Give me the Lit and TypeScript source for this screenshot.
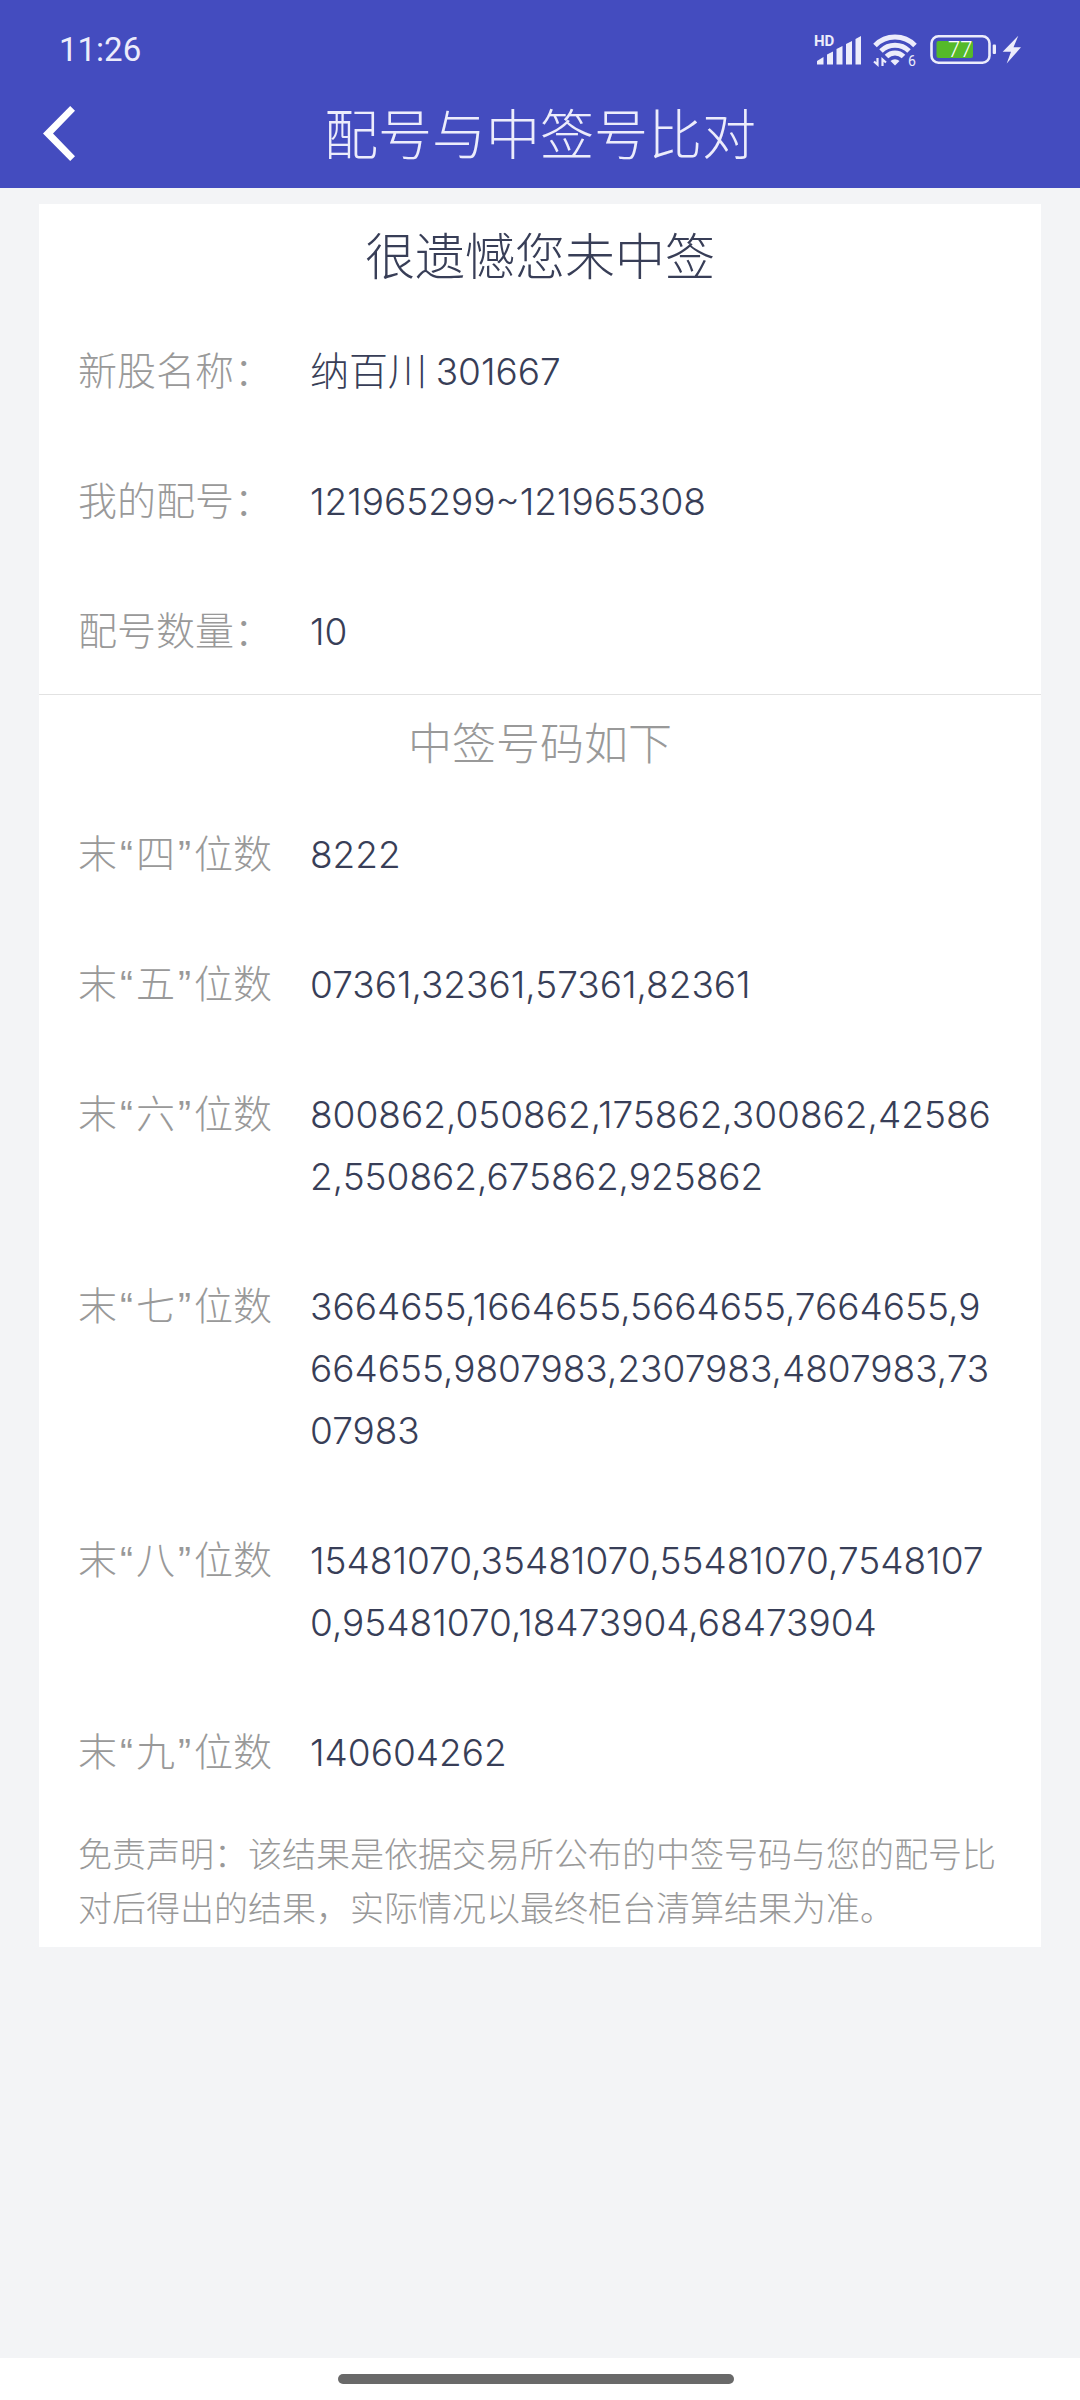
import { LitElement, html, css, svg } from "lit";
import { customElement, property } from "lit/decorators.js";

interface Entry {
  label: string;
  name?: string;
  digits: string;
}

interface WinningTail {
  digit: string;
  lines: string[];
}

const application: Entry[] = [
  { label: "新股名称：", name: "纳百川", digits: "301667" },
  { label: "我的配号：", digits: "121965299~121965308" },
  { label: "配号数量：", digits: "10" },
];

const winningTails: WinningTail[] = [
  { digit: "四", lines: ["8222"] },
  { digit: "五", lines: ["07361,32361,57361,82361"] },
  { digit: "六", lines: ["800862,050862,175862,300862,42586", "2,550862,675862,925862"] },
  {
    digit: "七",
    lines: ["3664655,1664655,5664655,7664655,9", "664655,9807983,2307983,4807983,73", "07983"],
  },
  { digit: "八", lines: ["15481070,35481070,55481070,7548107", "0,95481070,18473904,68473904"] },
  { digit: "九", lines: ["140604262"] },
];

@customElement("status-bar")
export class StatusBar extends LitElement {
  @property() time = "";
  @property({ type: Number }) battery = 0;

  static styles = css`
    :host {
      display: flex;
      justify-content: space-between;
      align-items: center;
      height: 78px;
      padding: 22px 59px 0;
      box-sizing: border-box;
      color: #ececfb;
    }
    .time {
      font: 400 33px/56px Roboto, "Liberation Sans", sans-serif;
    }
    .icons {
      display: block;
      width: 206px;
      height: 34px;
      overflow: visible;
    }
    .solid {
      fill: currentColor;
    }
    .line {
      fill: none;
      stroke: currentColor;
    }
    .charge {
      fill: #55b92a;
    }
    .network {
      font: 700 15px Roboto, sans-serif;
    }
    .generation {
      font: 400 14px Roboto, sans-serif;
    }
    .level {
      font: 300 22px Roboto, sans-serif;
      fill: #fff;
    }
  `;

  private signal() {
    return svg`
      <text class="solid network" x="-1" y="13">HD</text>
      <path class="solid" d="M2 28 8.500 24V31.500H2ZM12 21.500 18 18.500V31.500H12ZM21.500 16 27.500 13V31.500H21.500ZM31 11 37 8V31.500H31ZM40.500 6 46 3V31.500H40.500Z"/>`;
  }

  private wifi() {
    return svg`
      <g class="line" stroke-width="5">
        <path d="M60 12.400A28 28 0 0 1 100 12.400"/>
        <path d="M66 18A20 20 0 0 1 94 18"/>
        <path d="M71.500 23.500A12 12 0 0 1 88.500 23.500"/>
      </g>
      <path class="solid" d="M80 32.500 75.500 28A6.500 6.500 0 0 1 84.500 28Z"/>
      <path class="line" stroke-width="2.200" d="M62.500 25V31.500L59 28.500M67.500 33V26.500L71 29.500"/>
      <text class="solid generation" x="93" y="33">6</text>`;
  }

  private power() {
    return svg`
      <rect class="line" stroke-width="2.600" x="116.500" y="3.300" width="58" height="26.400" rx="7"/>
      <rect class="charge" x="121.500" y="8" width="36.500" height="17" rx="2"/>
      <text class="level" x="133" y="24">${this.battery}</text>
      <rect class="solid" x="177.700" y="11.500" width="3.300" height="9.500" rx="1"/>
      <path class="solid" d="M203.300 2.700 187.700 18.700H196L191.700 30.500 206 14.300H198.500Z"/>`;
  }

  render() {
    return html`
      <span class="time">${this.time}</span>
      <svg class="icons" viewBox="0 0 206 34" role="img" aria-label="HD, Wi-Fi 6, ${this.battery}%">
        ${this.signal()}${this.wifi()}${this.power()}
      </svg>
    `;
  }
}

@customElement("app-root")
export class AppRoot extends LitElement {
  static styles = css`
    :host {
      display: flex;
      flex-direction: column;
      min-height: 100vh;
      background: #f3f4f6;
      color: #383e57;
      font-family: "Noto Sans CJK SC", sans-serif;
      font-weight: 300;
    }
    .header {
      background: #444cbf;
    }
    .nav {
      display: grid;
      grid-template-columns: 118px 1fr 118px;
      align-items: start;
      height: 110px;
    }
    .back {
      display: flex;
      align-items: center;
      height: 110px;
      padding: 0 43px;
      border: 0;
      background: none;
    }
    .chevron {
      display: block;
      fill: #fff;
    }
    .title {
      margin: 0;
      font-size: 54px;
      font-weight: 300;
      line-height: 108px;
      text-align: center;
      color: #ececfb;
    }
    .content {
      flex: 1;
      padding: 16px 39px;
    }
    .card {
      background: #fff;
    }
    .result,
    .subtitle {
      margin: 0;
      font-weight: 300;
      text-align: center;
    }
    .result {
      padding-bottom: 2px;
      font-size: 50px;
      line-height: 98px;
    }
    .subtitle {
      font-size: 44px;
      line-height: 92px;
      color: #999;
    }
    .entries {
      margin: 0;
    }
    .winning {
      border-top: 1px solid #e2e2e2;
    }
    .entry {
      display: grid;
      grid-template-columns: 232px 1fr;
      padding: 33px 39px 35px;
      font-size: 39px;
      line-height: 62px;
    }
    .label {
      color: #999;
      white-space: nowrap;
    }
    .quote {
      margin: 0 3px;
      font-family: "Liberation Sans", sans-serif;
      line-height: 1;
    }
    .value {
      margin: 0;
      white-space: nowrap;
    }
    .digits {
      font-family: Inter, sans-serif;
      font-size: 37px;
      line-height: 1;
      white-space: pre;
    }
    .disclaimer {
      margin: 0;
      padding: 11px 39px 13px;
      font-size: 34px;
      line-height: 54px;
      color: #999;
    }
    .footer {
      display: flex;
      justify-content: center;
      align-items: center;
      height: 42px;
      padding-right: 8px;
      background: #fff;
    }
    .handle {
      width: 37%;
      height: 10px;
      border-radius: 5px;
      background: #696969;
    }
  `;

  render() {
    return html`
      <header class="header">
        <status-bar time="11:26" battery="77"></status-bar>
        <div class="nav">
          <button class="back" type="button" aria-label="返回">
            <svg class="chevron" width="32" height="55" viewBox="0 0 32 55" aria-hidden="true">
              <path d="M27.200 0 32 4.800 10 27.500 32 50.200 27.200 55 0 27.500Z" />
            </svg>
          </button>
          <h1 class="title">配号与中签号比对</h1>
        </div>
      </header>
      <main class="content">
        <article class="card">
          <section>
            <h2 class="result">很遗憾您未中签</h2>
            <dl class="entries">
              ${application.map(
                (entry) => html`
                  <div class="entry">
                    <dt class="label">${entry.label}</dt>
                    <dd class="value">${entry.name ? `${entry.name} ` : ""}<span class="digits">${entry.digits}</span></dd>
                  </div>
                `,
              )}
            </dl>
          </section>
          <section class="winning">
            <h2 class="subtitle">中签号码如下</h2>
            <dl class="entries">
              ${winningTails.map(
                (tail) => html`
                  <div class="entry">
                    <dt class="label">末<span class="quote">“</span>${tail.digit}<span class="quote">”</span>位数</dt>
                    <dd class="value"><span class="digits">${tail.lines.join("\n")}</span></dd>
                  </div>
                `,
              )}
            </dl>
          </section>
          <p class="disclaimer">
            免责声明：该结果是依据交易所公布的中签号码与您的配号比对后得出的结果，实际情况以最终柜台清算结果为准。
          </p>
        </article>
      </main>
      <footer class="footer"><div class="handle"></div></footer>
    `;
  }
}
